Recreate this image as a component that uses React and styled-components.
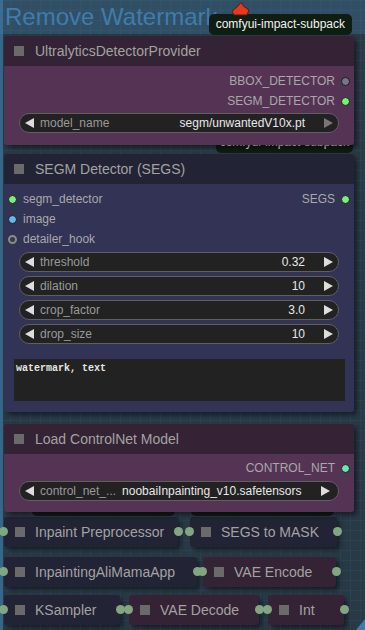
import styled, { createGlobalStyle } from "styled-components";

const GlobalStyle = createGlobalStyle`
  html, body {
    margin: 0;
    padding: 0;
    background: #222;
  }
  body {
    font-family: "Liberation Sans", Arial, sans-serif;
  }
`;

const Canvas = styled.div`
  position: relative;
  width: 365px;
  height: 630px;
  overflow: hidden;
  background-color: #293a47;
  background-image: linear-gradient(#2f414f 1px, transparent 1px),
    linear-gradient(90deg, #2f414f 1px, transparent 1px);
  background-size: 10px 10px;
  box-shadow: inset 3px 0 0 #36678a;
`;

const GroupTitle = styled.div`
  height: 34px;
  line-height: 34px;
  padding-left: 5px;
  font-size: 24px;
  color: #3f7cab;
  background: rgba(63, 120, 158, 0.35);
  white-space: nowrap;
`;

const Stack = styled.div`
  display: flex;
  flex-direction: column;
  padding-left: 4px;
  margin-top: 2px;
`;

const NodeWrap = styled.div`
  position: relative;
  z-index: ${(p) => p.$z || 1};
  width: ${(p) => p.$width || 350}px;
  margin-top: ${(p) => p.$top || 0}px;
  box-shadow: 3px 3px 5px rgba(0, 0, 0, 0.5);
  border-radius: 3px;
`;

const Badge = styled.div`
  position: absolute;
  bottom: calc(100% + 1px);
  right: ${(p) => p.$right || 2}px;
  height: 21px;
  line-height: 21px;
  padding: 0 ${(p) => p.$pad || 7}px;
  border-radius: 5px;
  background: #0f1d13;
  color: #f2f2f2;
  font-size: 12px;
  white-space: nowrap;
`;

const NodeTitle = styled.div`
  height: 30px;
  display: flex;
  align-items: center;
  gap: 11px;
  padding-left: 10px;
  background: ${(p) => p.$color};
  border-radius: 3px 3px 0 0;
  color: #a2a2a2;
  font-size: 14px;
`;

const Square = styled.span`
  width: 10px;
  height: 10px;
  background: #6a6a6a;
  flex: none;
`;

const NodeBody = styled.div`
  background: ${(p) => p.$color};
  padding: ${(p) => p.$pad || "5px 0 12px"};
  border-radius: 0 0 3px 3px;
  display: flex;
  flex-direction: column;
`;

const SlotRow = styled.div`
  height: 20px;
  display: flex;
  align-items: center;
  justify-content: space-between;
  padding: 0 4px 0 4px;
`;

const Slot = styled.div`
  display: flex;
  align-items: center;
  gap: 6px;
  flex-direction: ${(p) => (p.$out ? "row-reverse" : "row")};
  margin-left: ${(p) => (p.$out ? "auto" : 0)};
  color: #a8a8a8;
  font-size: 12px;
`;

const Dot = styled.span`
  width: 9px;
  height: 9px;
  border-radius: 50%;
  box-sizing: border-box;
  background: ${(p) => p.$color};
  border: 1px solid ${(p) => (p.$ring ? "#8a8a8a" : "#1c1c1c")};
  ${(p) => p.$ring && "border-width: 2px; background: #3a3a4a;"}
`;

const Widget = styled.div`
  height: 20px;
  box-sizing: border-box;
  margin: ${(p) => p.$top || 4}px 15px 0;
  border: 1px solid #5f5f5f;
  border-radius: 10px;
  background: #222;
  display: flex;
  align-items: center;
  padding: 0 5px;
  font-size: 12px;
`;

const Label = styled.span`
  color: #999;
  margin-left: 6px;
  white-space: nowrap;
`;

const Value = styled.span`
  color: #e8e8e8;
  margin-left: ${(p) => (p.$near ? "6px" : "auto")};
  margin-right: 19px;
  white-space: nowrap;
`;

const TextArea = styled.div`
  margin: 15px 9px 0 10px;
  height: 42px;
  box-sizing: border-box;
  padding: 4px 2px;
  background: #222;
  color: #e6e6e6;
  font-family: "Liberation Mono", "Courier New", monospace;
  font-size: 10px;
  font-weight: bold;
`;

const Row = styled.div`
  display: flex;
  gap: ${(p) => p.$gap}px;
  margin-top: ${(p) => p.$top}px;
`;

const Collapsed = styled.div`
  position: relative;
  z-index: 1;
  width: ${(p) => p.$width}px;
  height: 30px;
  box-sizing: border-box;
  display: flex;
  align-items: center;
  gap: 10px;
  padding-left: 11px;
  background: ${(p) => p.$color};
  border-radius: 3px;
  box-shadow: 3px 3px 5px rgba(0, 0, 0, 0.5);
  color: #a2a2a2;
  font-size: 14px;
  white-space: nowrap;
`;

const Port = styled.span`
  position: absolute;
  top: 10px;
  ${(p) => (p.$right ? "right: -5px;" : "left: -5px;")}
  width: 9px;
  height: 9px;
  border-radius: 50%;
  background: #82a682;
`;

const Flag = styled.svg`
  position: absolute;
  left: 231px;
  top: 2px;
  z-index: 4;
`;

const Corner = styled.div`
  position: absolute;
  right: 0;
  bottom: 0;
  width: 9px;
  height: 11px;
  background: #3f7cab;
  clip-path: polygon(100% 0, 100% 100%, 0 100%);
`;

const Arrow = ({ dir, color = "#ddd" }) => (
  <svg width="9" height="10" viewBox="0 0 9 10" style={{ flex: "none" }}>
    <polygon
      points={dir === "left" ? "9,0 9,10 0,5" : "0,0 0,10 9,5"}
      fill={color}
    />
  </svg>
);

const Combo = ({ label, value, top, near, rightColor }) => (
  <Widget $top={top}>
    <Arrow dir="left" />
    <Label>{label}</Label>
    <Value $near={near}>{value}</Value>
    <Arrow dir="right" color={rightColor} />
  </Widget>
);

const PURPLE_T = "#342334";
const PURPLE_B = "#553355";
const BLUE_T = "#232336";
const BLUE_B = "#333356";

const MiniNode = ({ name, width, color, badge }) => (
  <Collapsed $width={width} $color={color}>
    {badge && <Badge $right={3}>comfyui-impact-subpack</Badge>}
    <Port />
    <Square />
    {name}
    <Port $right />
  </Collapsed>
);

const App = () => {
  return (
    <Canvas>
      <GlobalStyle />
      <GroupTitle>Remove Watermark</GroupTitle>
      <Flag width="19" height="14" viewBox="0 0 19 14">
        <polygon
          points="10,0.5 13,4.5 18,8 16,13 3,13 1,9 6,5"
          fill="#e5391f"
          stroke="#5a1a10"
          strokeWidth="1"
        />
      </Flag>

      <Stack>
        <NodeWrap $z={3}>
          <Badge>comfyui-impact-subpack</Badge>
          <NodeTitle $color={PURPLE_T}>
            <Square />
            UltralyticsDetectorProvider
          </NodeTitle>
          <NodeBody $color={PURPLE_B}>
            <SlotRow>
              <Slot $out>
                <Dot $color="#77778a" />
                BBOX_DETECTOR
              </Slot>
            </SlotRow>
            <SlotRow>
              <Slot $out>
                <Dot $color="#7af07a" />
                SEGM_DETECTOR
              </Slot>
            </SlotRow>
            <Combo
              top={2}
              label="model_name"
              value="segm/unwantedV10x.pt"
              rightColor="#777"
            />
          </NodeBody>
        </NodeWrap>

        <NodeWrap $z={2} $top={9}>
          <Badge $right={1} $pad={4}>comfyui-impact-subpack</Badge>
          <NodeTitle $color={BLUE_T}>
            <Square />
            SEGM Detector (SEGS)
          </NodeTitle>
          <NodeBody $color={BLUE_B} $pad="5px 0 11px">
            <SlotRow>
              <Slot>
                <Dot $color="#7af07a" />
                segm_detector
              </Slot>
              <Slot $out>
                <Dot $color="#7af07a" />
                SEGS
              </Slot>
            </SlotRow>
            <SlotRow>
              <Slot>
                <Dot $color="#64b5f6" />
                image
              </Slot>
            </SlotRow>
            <SlotRow>
              <Slot>
                <Dot $ring />
                detailer_hook
              </Slot>
            </SlotRow>
            <Combo top={3} label="threshold" value="0.32" />
            <Combo label="dilation" value="10" />
            <Combo label="crop_factor" value="3.0" />
            <Combo label="drop_size" value="10" />
            <TextArea>watermark, text</TextArea>
          </NodeBody>
        </NodeWrap>

        <NodeWrap $z={3} $top={12}>
          <NodeTitle $color={PURPLE_T}>
            <Square />
            Load ControlNet Model
          </NodeTitle>
          <NodeBody $color={PURPLE_B} $pad="4px 0 11px">
            <SlotRow>
              <Slot $out>
                <Dot $color="#6ee3b5" />
                CONTROL_NET
              </Slot>
            </SlotRow>
            <Combo
              top={3}
              near
              label="control_net_..."
              value="noobaiInpainting_v10.safetensors"
            />
          </NodeBody>
        </NodeWrap>

        <Row $gap={12} $top={5}>
          <MiniNode name="Inpaint Preprocessor" width={174} color={BLUE_T} badge />
          <MiniNode name="SEGS to MASK" width={147} color={BLUE_T} badge />
        </Row>
        <Row $gap={6} $top={10}>
          <MiniNode name="InpaintingAliMamaApp" width={193} color={BLUE_T} />
          <MiniNode name="VAE Encode" width={133} color={PURPLE_T} />
        </Row>
        <Row $gap={9} $top={8}>
          <MiniNode name="KSampler" width={116} color={BLUE_T} />
          <MiniNode name="VAE Decode" width={130} color={PURPLE_T} />
          <MiniNode name="Int" width={76} color={PURPLE_T} />
        </Row>
      </Stack>
      <Corner />
    </Canvas>
  );
};

export default App;
